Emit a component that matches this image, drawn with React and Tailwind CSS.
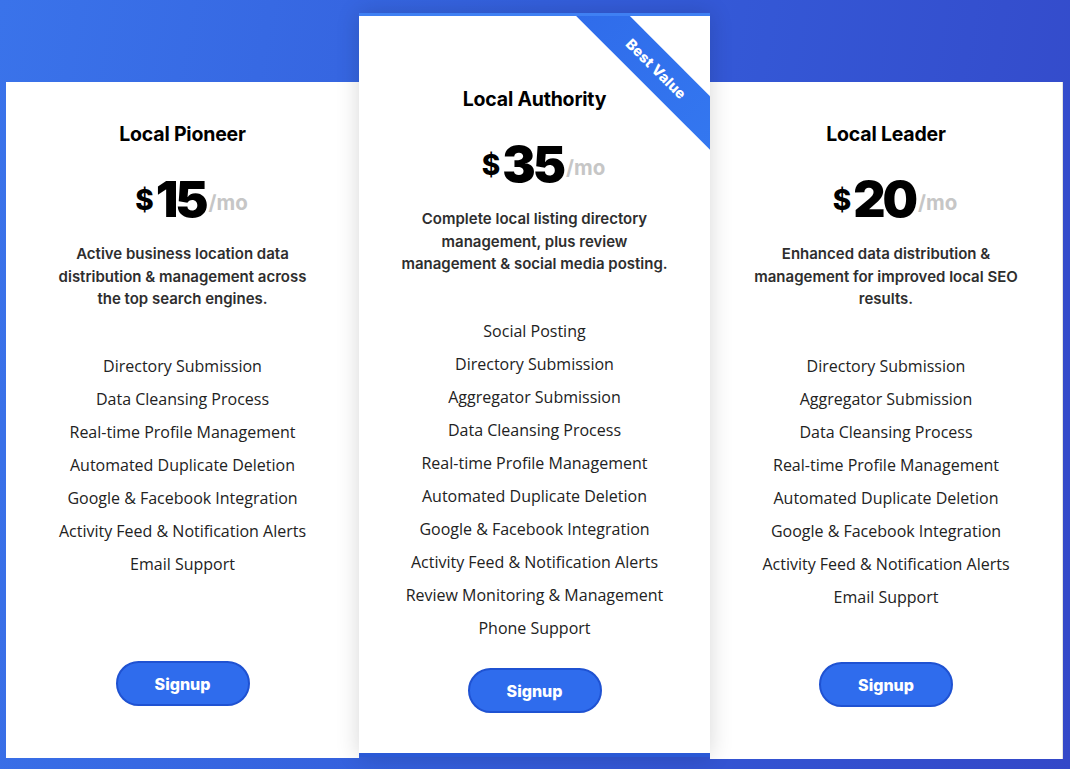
import React from 'react';

const plans = [
  {
    name: 'Local Pioneer',
    price: '15',
    desc: ['Active business location data', 'distribution & management across', 'the top search engines.'],
    features: [
      'Directory Submission',
      'Data Cleansing Process',
      'Real-time Profile Management',
      'Automated Duplicate Deletion',
      'Google & Facebook Integration',
      'Activity Feed & Notification Alerts',
      'Email Support',
    ],
  },
  {
    name: 'Local Authority',
    price: '35',
    featured: true,
    desc: ['Complete local listing directory', 'management, plus review', 'management & social media posting.'],
    features: [
      'Social Posting',
      'Directory Submission',
      'Aggregator Submission',
      'Data Cleansing Process',
      'Real-time Profile Management',
      'Automated Duplicate Deletion',
      'Google & Facebook Integration',
      'Activity Feed & Notification Alerts',
      'Review Monitoring & Management',
      'Phone Support',
    ],
  },
  {
    name: 'Local Leader',
    price: '20',
    desc: ['Enhanced data distribution &', 'management for improved local SEO', 'results.'],
    features: [
      'Directory Submission',
      'Aggregator Submission',
      'Data Cleansing Process',
      'Real-time Profile Management',
      'Automated Duplicate Deletion',
      'Google & Facebook Integration',
      'Activity Feed & Notification Alerts',
      'Email Support',
    ],
  },
];

const heading = { fontFamily: 'Inter, "Liberation Sans", sans-serif' };
const body = { fontFamily: '"Open Sans", "Liberation Sans", sans-serif' };

function PlanBody({ plan }) {
  return (
    <>
      <h3 className="text-[19.5px] leading-[24px] font-bold text-black tracking-[-0.2px]" style={heading}>
        {plan.name}
      </h3>

      {/* price row */}
      <div className="mt-[28px] flex items-center justify-center pl-[18px]" style={heading}>
        <span className="text-[28px] leading-none font-extrabold text-black mr-[2px] mt-[2px]">$</span>
        <span className="text-[50px] leading-none font-black text-black tracking-[-3px]">{plan.price}</span>
        <span className="text-[20.5px] leading-none font-bold text-[#c6c6c6] mt-[8px] ml-[3px]">/mo</span>
      </div>

      <p className="mt-[19px] text-[15px] leading-[22.5px] font-semibold text-[#2e2e2e]" style={heading}>
        {plan.desc.map((line, i) => (
          <React.Fragment key={i}>
            {line}
            <br />
          </React.Fragment>
        ))}
      </p>

      <ul className="mt-[39px] text-[16px] leading-[33px] text-[#222]" style={body}>
        {plan.features.map((f) => (
          <li key={f}>{f}</li>
        ))}
      </ul>

      <button
        className="mt-auto w-[134px] h-[45px] rounded-full bg-[#2f6ced] border-2 border-[#1f52d2] text-white text-[16px] font-extrabold"
        style={heading}
      >
        Signup
      </button>
    </>
  );
}

export default function App() {
  const [left, middle, right] = plans;

  return (
    <div className="w-[1070px] h-[769px] overflow-hidden bg-[linear-gradient(100deg,#3a73ea_0%,#345fdc_45%,#3448c8_100%)]">
      <div className="flex items-start pl-[6px]">
        {/* left card */}
        <div className="mt-[82px] w-[353px] h-[676px] bg-white flex flex-col items-center text-center pt-[40px] pb-[52px]">
          <PlanBody plan={left} />
        </div>

        {/* featured card */}
        <div className="relative z-10 mt-[13px] w-[351px] h-[744px] bg-white overflow-hidden border-t-[3px] border-t-[#3f80f3] border-b-[4px] border-b-[#2a59d6] shadow-[0_0_22px_rgba(0,0,0,0.16)] flex flex-col items-center text-center pt-[71px] pb-[40px]">
          <div className="absolute left-[186px] top-[34px] w-[222px] h-[38px] rotate-45 bg-[linear-gradient(90deg,#2f6bea,#3478f0)] flex items-center justify-center">
            <span className="text-white text-[14.5px] font-extrabold tracking-[0.2px]" style={heading}>Best Value</span>
          </div>
          <PlanBody plan={middle} />
        </div>

        {/* right card */}
        <div className="mt-[82px] w-[353px] h-[677px] bg-white border-r border-[#e2e2e2] flex flex-col items-center text-center pt-[40px] pb-[52px]">
          <PlanBody plan={right} />
        </div>
      </div>
    </div>
  );
}
